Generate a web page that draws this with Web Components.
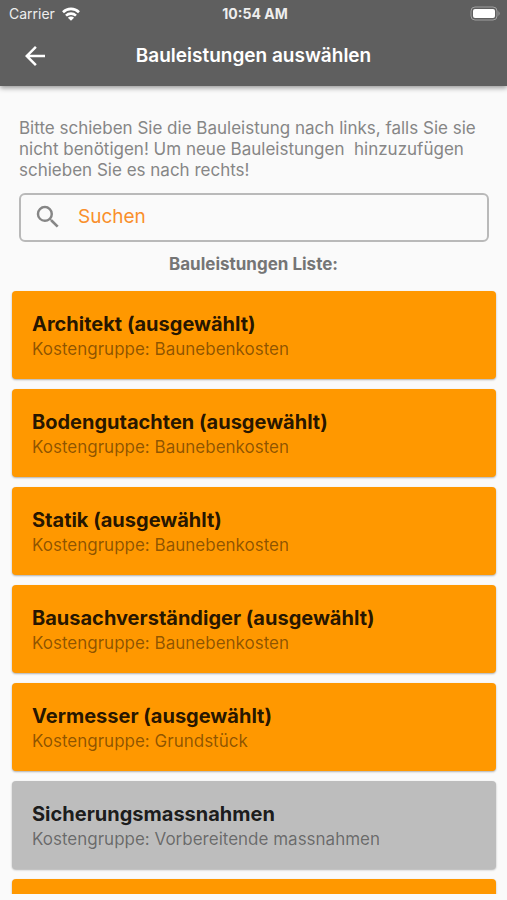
<!DOCTYPE html>
<html lang="de">
<head>
<meta charset="utf-8">
<meta name="viewport" content="width=device-width, initial-scale=1">
<title>Bauleistungen auswählen</title>
<style>
  body {
    margin: 0;
    background-color: #fafafa;
    font-family: Inter, "Liberation Sans", sans-serif;
  }
</style>
</head>
<body>
<trade-app>
  <status-bar slot="top" carrier="Carrier" time="10:54 AM"></status-bar>
  <app-bar slot="top">Bauleistungen auswählen</app-bar>
  <intro-text>Bitte schieben Sie die Bauleistung nach links, falls Sie sie nicht benötigen! Um neue Bauleistungen&nbsp; hinzuzufügen schieben Sie es nach rechts!</intro-text>
  <search-field placeholder="Suchen"></search-field>
  <trade-list heading="Bauleistungen Liste:">
    <trade-card selected group="Baunebenkosten">Architekt</trade-card>
    <trade-card selected group="Baunebenkosten">Bodengutachten</trade-card>
    <trade-card selected group="Baunebenkosten">Statik</trade-card>
    <trade-card selected group="Baunebenkosten">Bausachverständiger</trade-card>
    <trade-card selected group="Grundstück">Vermesser</trade-card>
    <trade-card group="Vorbereitende massnahmen">Sicherungsmassnahmen</trade-card>
    <trade-card selected></trade-card>
  </trade-list>
</trade-app>

<script>
class TradeApp extends HTMLElement {
  constructor() {
    super()
    this.attachShadow({ mode: "open" })
  }

  connectedCallback() {
    this.shadowRoot.innerHTML = `
      <style>
        :host {
          display: flex;
          flex-direction: column;
          height: 100vh;
          box-sizing: border-box;
          padding-bottom: 6px;
        }
        header {
          flex: none;
          background-color: #5f5f5f;
          color: white;
          box-shadow: 0 2px 5px rgba(0, 0, 0, 0.4);
        }
        main {
          flex: 1;
          min-height: 0;
          display: flex;
          flex-direction: column;
          padding-top: 32px;
        }
      </style>
      <header><slot name="top"></slot></header>
      <main><slot></slot></main>
    `
  }
}

class StatusBar extends HTMLElement {
  constructor() {
    super()
    this.attachShadow({ mode: "open" })
  }

  connectedCallback() {
    this.shadowRoot.innerHTML = `
      <style>
        :host {
          display: grid;
          grid-template-columns: 1fr auto 1fr;
          align-items: center;
          height: 27px;
          padding: 0 6px 0 9px;
          font-size: 14px;
          color: #eeeeee;
        }
        .carrier {
          display: flex;
          align-items: center;
          gap: 7px;
        }
        .time {
          font-weight: 700;
        }
        .battery {
          justify-self: end;
        }
        svg {
          display: block;
        }
      </style>
      <div class="carrier">
        <span>${this.getAttribute("carrier")}</span>
        <svg width="18" height="14" viewBox="0 0 18 14" fill="none" stroke="#ffffff" stroke-width="2.6" aria-hidden="true">
          <path d="M1 5.2a11.4 11.4 0 0 1 16 0" />
          <path d="M4 8.6a7.2 7.2 0 0 1 10 0" />
          <path d="M9 13.8L5.9 10.7a4.4 4.4 0 0 1 6.2 0z" fill="#ffffff" stroke="none" />
        </svg>
      </div>
      <span class="time">${this.getAttribute("time")}</span>
      <svg class="battery" width="31" height="15" viewBox="0 0 31 15" aria-hidden="true">
        <rect x="1" y="1" width="26" height="13" rx="4" fill="none" stroke="#a0a0a0" />
        <rect x="3" y="3" width="22" height="9" rx="2" fill="#ffffff" />
        <path d="M28.5 5a3.4 3.4 0 0 1 0 5z" fill="#a0a0a0" />
      </svg>
    `
  }
}

class AppBar extends HTMLElement {
  constructor() {
    super()
    this.attachShadow({ mode: "open" })
  }

  connectedCallback() {
    this.shadowRoot.innerHTML = `
      <style>
        :host {
          display: grid;
          grid-template-columns: 70px 1fr 70px;
          align-items: center;
          box-sizing: border-box;
          height: 59px;
          padding-bottom: 2px;
        }
        button {
          justify-self: center;
          display: flex;
          padding: 8px;
          border: none;
          background: none;
          color: inherit;
          cursor: pointer;
        }
        h1 {
          margin: 0;
          text-align: center;
          font-size: 19px;
          line-height: 24px;
          font-weight: 600;
        }
      </style>
      <button type="button" aria-label="Zurück">
        <svg width="30" height="30" viewBox="0 0 24 24" fill="currentColor" aria-hidden="true">
          <path d="M20 11H7.83l5.59-5.59L12 4l-8 8 8 8 1.41-1.41L7.83 13H20v-2z" />
        </svg>
      </button>
      <h1><slot></slot></h1>
    `
  }
}

class IntroText extends HTMLElement {
  constructor() {
    super()
    this.attachShadow({ mode: "open" })
  }

  connectedCallback() {
    this.shadowRoot.innerHTML = `
      <style>
        :host {
          display: block;
          padding: 0 19px;
        }
        p {
          margin: 0;
          font-size: 17px;
          line-height: 21px;
          color: #868686;
        }
      </style>
      <p><slot></slot></p>
    `
  }
}

class SearchField extends HTMLElement {
  constructor() {
    super()
    this.attachShadow({ mode: "open" })
  }

  _addEventListeners() {
    const input = this.shadowRoot.querySelector("input")

    input.addEventListener("input", () => {
      const query = input.value.trim().toLowerCase()
      document.querySelectorAll("trade-card").forEach((card) => {
        card.hidden = !card.textContent.toLowerCase().includes(query)
      })
    })
  }

  connectedCallback() {
    const placeholder = this.getAttribute("placeholder")
    this.shadowRoot.innerHTML = `
      <style>
        :host {
          display: block;
          padding: 12px 18px 0 19px;
        }
        label {
          display: flex;
          align-items: center;
          gap: 15px;
          box-sizing: border-box;
          height: 49px;
          padding: 0 12px 2px;
          border: 2px solid #b9b9b9;
          border-radius: 6px;
        }
        svg {
          flex: none;
          color: #868686;
        }
        input {
          flex: 1;
          min-width: 0;
          padding: 0;
          border: none;
          outline: none;
          background: none;
          font: inherit;
          font-size: 19px;
          color: #333333;
        }
        input::placeholder {
          color: #f98f2b;
          opacity: 1;
        }
      </style>
      <label>
        <svg width="30" height="30" viewBox="0 0 24 24" fill="currentColor" aria-hidden="true">
          <path d="M15.5 14h-.79l-.28-.27A6.47 6.47 0 0 0 16 9.5 6.5 6.5 0 1 0 9.5 16c1.61 0 3.09-.59 4.23-1.57l.27.28v.79l5 4.99L20.49 19l-4.99-5zm-6 0C7.01 14 5 11.99 5 9.5S7.01 5 9.5 5 14 7.01 14 9.5 11.99 14 9.5 14z" />
        </svg>
        <input type="text" placeholder="${placeholder}" aria-label="${placeholder}">
      </label>
    `
    this._addEventListeners()
  }
}

class TradeList extends HTMLElement {
  constructor() {
    super()
    this.attachShadow({ mode: "open" })
  }

  connectedCallback() {
    this.shadowRoot.innerHTML = `
      <style>
        :host {
          flex: 1;
          min-height: 0;
          display: flex;
          flex-direction: column;
        }
        h2 {
          margin: 0;
          padding: 12px 0 14px;
          text-align: center;
          font-size: 17px;
          line-height: 21px;
          font-weight: 700;
          color: #757575;
        }
        .cards {
          flex: 1;
          min-height: 0;
          display: flex;
          flex-direction: column;
          gap: 10px;
          padding: 2px 11px 0 12px;
          overflow-y: auto;
          scrollbar-width: none;
        }
      </style>
      <h2>${this.getAttribute("heading")}</h2>
      <div class="cards"><slot></slot></div>
    `
  }
}

class TradeCard extends HTMLElement {
  constructor() {
    super()
    this.attachShadow({ mode: "open" })
  }

  get group() {
    return this.getAttribute("group")
  }

  connectedCallback() {
    const suffix = this.hasAttribute("selected") ? " (ausgewählt)" : ""
    this.shadowRoot.innerHTML = `
      <style>
        :host {
          display: block;
          flex: none;
          box-sizing: border-box;
          min-height: 88px;
          padding: 20px 20px 18px;
          border-radius: 4px;
          background-color: #bdbdbd;
          box-shadow: 0 1px 2px rgba(0, 0, 0, 0.3);
        }
        :host([selected]) {
          background-color: #ff9800;
        }
        :host([hidden]) {
          display: none;
        }
        h3 {
          margin: 0;
          font-size: 20px;
          line-height: 26px;
          font-weight: 700;
          color: rgba(0, 0, 0, 0.87);
        }
        p {
          margin: 0;
          font-size: 17px;
          line-height: 24px;
          color: rgba(0, 0, 0, 0.45);
        }
      </style>
      ${this.group ? `<h3><slot></slot>${suffix}</h3><p>Kostengruppe: ${this.group}</p>` : ""}
    `
  }
}

customElements.define("trade-app", TradeApp)
customElements.define("status-bar", StatusBar)
customElements.define("app-bar", AppBar)
customElements.define("intro-text", IntroText)
customElements.define("search-field", SearchField)
customElements.define("trade-list", TradeList)
customElements.define("trade-card", TradeCard)
</script>
</body>
</html>
